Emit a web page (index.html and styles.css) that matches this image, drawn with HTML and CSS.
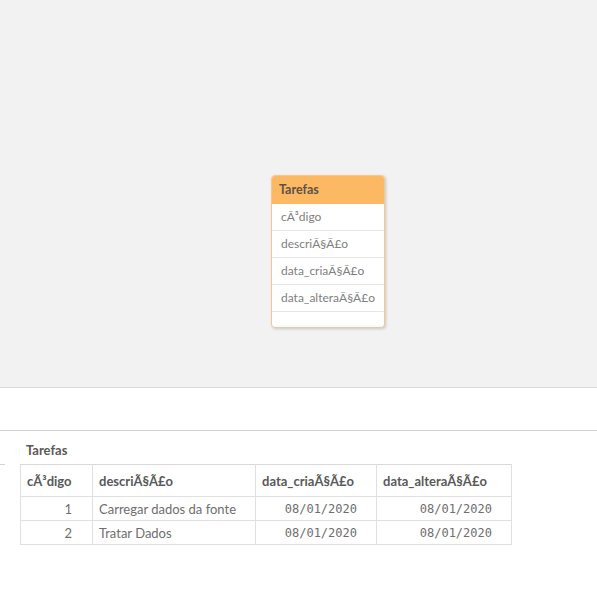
FILE: index.html
```html
<!DOCTYPE html>
<html>
<head>
<meta charset="utf-8">
<link rel="stylesheet" href="styles.css">
</head>
<body>
<div class="canvas">
  <div class="card">
    <div class="card-head">Tarefas</div>
    <div class="card-row">cÃ³digo</div>
    <div class="card-row">descriÃ§Ã£o</div>
    <div class="card-row">data_criaÃ§Ã£o</div>
    <div class="card-row">data_alteraÃ§Ã£o</div>
    <div class="card-row empty"></div>
  </div>
</div>
<div class="gap"></div>
<div class="panel">
  <div class="left-stub"></div>
  <div class="content">
    <div class="title">Tarefas</div>
    <table class="grid">
      <colgroup>
        <col class="c1"><col class="c2"><col class="c3"><col class="c4">
      </colgroup>
      <thead>
        <tr><th>cÃ³digo</th><th>descriÃ§Ã£o</th><th>data_criaÃ§Ã£o</th><th>data_alteraÃ§Ã£o</th></tr>
      </thead>
      <tbody>
        <tr><td class="num">1</td><td>Carregar dados da fonte</td><td class="date">08/01/2020</td><td class="date">08/01/2020</td></tr>
        <tr><td class="num">2</td><td>Tratar Dados</td><td class="date">08/01/2020</td><td class="date">08/01/2020</td></tr>
      </tbody>
    </table>
  </div>
</div>
</body>
</html>
```
FILE: styles.css
```css
html, body {
  margin: 0;
  padding: 0;
  background: #ffffff;
  font-family: Lato, "Open Sans", sans-serif;
  color: #595959;
}
.canvas {
  height: 388px;
  background: #f2f2f2;
  border-bottom: 1px solid #d9d9d9;
  display: flex;
  justify-content: flex-start;
  padding-left: 271px;
  padding-top: 175px;
  box-sizing: border-box;
}
.card {
  width: 114px;
  height: 153px;
  background: #ffffff;
  border: 1px solid #f4c890;
  border-radius: 4px;
  box-shadow: 1px 1px 3px rgba(0,0,0,0.18);
  overflow: hidden;
  box-sizing: border-box;
  display: flex;
  flex-direction: column;
}
.card-head {
  background: #fdb863;
  height: 28px;
  line-height: 28px;
  padding-left: 7px;
  font-size: 12.5px;
  font-weight: 700;
  color: #5c5248;
}
.card-row {
  height: 26px;
  line-height: 26px;
  border-bottom: 1px solid #e6e6e6;
  padding-left: 9px;
  font-size: 12px;
  color: #808080;
  white-space: nowrap;
}
.card-row.empty {
  border-bottom: none;
  flex: 1;
}
.gap {
  height: 42px;
  border-bottom: 1px solid #d4d4d4;
}
.panel {
  position: relative;
  padding-left: 20px;
}
.left-stub {
  position: absolute;
  left: 0;
  top: 33px;
  width: 5px;
  height: 1px;
  background: #d4d4d4;
}
.title {
  height: 33px;
  line-height: 38px;
  padding-left: 6px;
  font-size: 13px;
  font-weight: 700;
  color: #595959;
}
.grid {
  border-collapse: collapse;
  font-size: 13px;
}
col.c1 { width: 72px; }
col.c2 { width: 163px; }
col.c3 { width: 121px; }
col.c4 { width: 135px; }
.grid th, .grid td {
  border: 1px solid #e0e0e0;
  padding: 0 6px;
  white-space: nowrap;
}
.grid th {
  height: 31px;
  text-align: left;
  font-weight: 700;
  color: #595959;
  border-top-color: #d9d9d9;
}
.grid td {
  height: 23px;
  color: #6e6e6e;
}
.grid td.num {
  text-align: right;
  padding-right: 20px;
  color: #6e6e6e;
}
.grid td.date {
  text-align: right;
  font-family: "DejaVu Sans Mono", monospace;
  font-size: 12px;
  padding-right: 19px;
  color: #6e6e6e;
}
```
